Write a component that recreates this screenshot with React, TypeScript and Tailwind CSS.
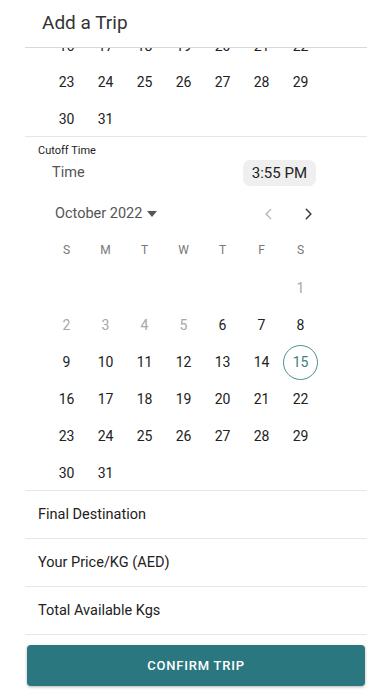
import React from 'react';

const weekdays = ['S', 'M', 'T', 'W', 'T', 'F', 'S'];

// October 2022 starts on a Saturday
const octoberCells: (number | null)[] = [
  null, null, null, null, null, null, 1,
  ...Array.from({ length: 30 }, (_, i) => i + 2),
];

function DayCell({ day }: { day: number | null }) {
  if (day === null) return <div className="h-[37px]" />;
  const disabled = day <= 5;
  const selected = day === 15;
  return (
    <div className="h-[37px] pt-[4px] flex items-center justify-center">
      {selected ? (
        <div className="shrink-0 w-[35px] h-[35px] rounded-full border border-[#4f8f8d] flex items-center justify-center text-[#3f7f7d] text-[14px]">
          {day}
        </div>
      ) : (
        <span className={`text-[14px] ${disabled ? 'text-[#a8a8a8]' : 'text-[#222]'}`}>{day}</span>
      )}
    </div>
  );
}

function Row({ days }: { days: number[] }) {
  return (
    <div className="grid grid-cols-[repeat(7,39px)] pl-[22px]">
      {days.map((d) => (
        <div key={d} className="h-[37px] pt-[4px] flex items-center justify-center text-[14px] text-[#222]">
          {d}
        </div>
      ))}
    </div>
  );
}

export default function App() {
  return (
    <div
      className="w-[392px] h-[696px] bg-white overflow-hidden flex flex-col"
      style={{ fontFamily: 'Roboto, "Liberation Sans", sans-serif' }}
    >
      {/* Header */}
      <div className="h-[47px] flex items-center pl-[42px] text-[19px] text-[#333]">Add a Trip</div>

      <div className="mx-[25px] flex flex-col">
        {/* scrolled-away previous picker, mostly hidden under the header */}
        <div className="border-t border-[#d8d8d8] h-[15px] overflow-hidden">
          <div className="-mt-[22px]">
            <Row days={[16, 17, 18, 19, 20, 21, 22]} />
          </div>
        </div>
        <Row days={[23, 24, 25, 26, 27, 28, 29]} />
        <Row days={[30, 31]} />

        {/* Cutoff time */}
        <div className="border-t border-[#e6e6e6] pt-[7px]">
          <div className="h-[14px] flex items-center pl-[13px] text-[11px] text-[#222]">Cutoff Time</div>
          <div className="mt-[2px] h-[26px] flex items-center justify-between pl-[27px] pr-[51px]">
            <span className="text-[14.5px] text-[#555]">Time</span>
            <span className="h-[26px] px-[9px] rounded-[7px] bg-[#efefef] flex items-center text-[15px] text-[#222]">
              3:55 PM
            </span>
          </div>

          {/* Month header */}
          <div className="mt-[9px] h-[36px] pt-[1px] flex items-center justify-between pl-[30px] pr-[52px]">
            <div className="flex items-center gap-[5px] text-[14.5px] text-[#555]">
              <span>October 2022</span>
              <svg width="10" height="6" viewBox="0 0 10 6">
                <path d="M0 0h10L5 6z" fill="#555" />
              </svg>
            </div>
            <div className="flex items-center gap-[25px]">
              <svg width="14" height="14" viewBox="0 0 24 24" fill="none" stroke="#b0b0b0" strokeWidth="2.2" strokeLinecap="round" strokeLinejoin="round">
                <path d="M15 4l-8 8 8 8" />
              </svg>
              <svg width="14" height="14" viewBox="0 0 24 24" fill="none" stroke="#333" strokeWidth="2.4" strokeLinecap="round" strokeLinejoin="round">
                <path d="M9 4l8 8-8 8" />
              </svg>
            </div>
          </div>

          {/* Weekdays */}
          <div className="grid grid-cols-[repeat(7,39px)] pl-[22px]">
            {weekdays.map((w, i) => (
              <div key={i} className="h-[37px] flex items-center justify-center text-[12px] text-[#777]">
                {w}
              </div>
            ))}
          </div>

          {/* Days */}
          <div className="grid grid-cols-[repeat(7,39px)] pl-[22px]">
            {octoberCells.map((d, i) => (
              <DayCell key={i} day={d} />
            ))}
          </div>
        </div>

        {/* Fields */}
        {['Final Destination', 'Your Price/KG (AED)', 'Total Available Kgs'].map((label) => (
          <div key={label} className="h-[48px] pt-[1px] border-t border-[#e6e6e6] flex items-center pl-[13px] text-[14.5px] text-[#222]">
            {label}
          </div>
        ))}
        <div className="border-t border-[#e6e6e6]" />

        <button className="mt-[10px] mx-[2px] h-[41px] rounded-[4px] bg-[#2a7780] text-white text-[13px] font-medium tracking-[0.06em] shadow-[0_1px_3px_rgba(0,0,0,0.3)]">
          CONFIRM TRIP
        </button>
      </div>
    </div>
  );
}
